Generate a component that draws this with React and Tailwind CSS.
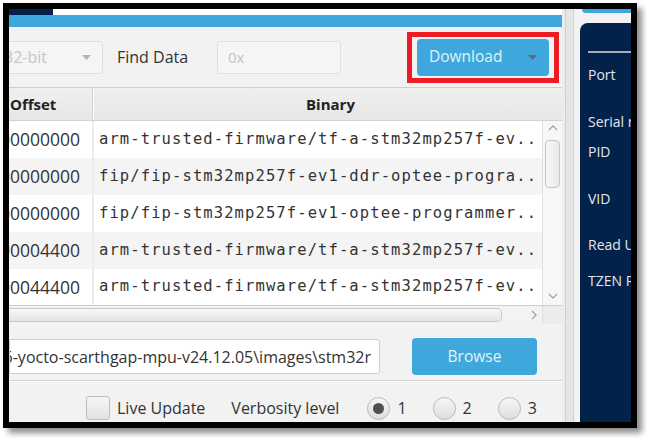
import React from "react";

const rows = [
  ["0x00000000", "arm-trusted-firmware/tf-a-stm32mp257f-ev.."],
  ["0x00000000", "fip/fip-stm32mp257f-ev1-ddr-optee-progra.."],
  ["0x00000000", "fip/fip-stm32mp257f-ev1-optee-programmer.."],
  ["0x00004400", "arm-trusted-firmware/tf-a-stm32mp257f-ev.."],
  ["0x00044400", "arm-trusted-firmware/tf-a-stm32mp257f-ev.."],
];

function Chevron({ dir }) {
  const pts = {
    up: "1,6 5,2 9,6",
    down: "1,2 5,6 9,2",
    right: "2,1 6,5 2,9",
  }[dir];
  return (
    <svg width="10" height="10" viewBox="0 0 10 10">
      <polyline points={pts} fill="none" stroke="#a2a2a2" strokeWidth="1.3" />
    </svg>
  );
}

function Radio({ checked, label }) {
  return (
    <div className="flex items-center">
      <div className="w-[23px] h-[23px] rounded-full border border-[#b9b9b9] bg-gradient-to-b from-[#f6f6f6] to-[#dedede] flex items-center justify-center">
        {checked && <div className="w-[11px] h-[11px] rounded-full bg-[#505050]" />}
      </div>
      <span className="ml-[7px] text-[16px] text-[#333]">{label}</span>
    </div>
  );
}

export default function App() {
  const sans = { fontFamily: '"Open Sans", "DejaVu Sans", sans-serif' };
  return (
    <div className="w-[647px] h-[438px] bg-white overflow-hidden" style={sans}>
      <div className="relative ml-[3px] mt-[3px] w-[634px] h-[425px] border-[6px] border-black shadow-[5px_5px_6px_rgba(0,0,0,0.45)] flex bg-[#f2f2f2]">
        {/* Left panel */}
        <div className="w-[553px] h-full flex flex-col overflow-hidden">
          <div className="h-[6px] bg-white flex">
            <div className="w-[44px] bg-[#03224a]" />
          </div>
          <div className="h-[12px] bg-[#3ea8dc]" />
          {/* toolbar */}
          <div className="h-[60px] flex items-center">
            <div className="-ml-[16px] w-[110px] h-[33px] rounded-[4px] border border-[#dedede] bg-[#f5f5f5] flex items-center justify-between pl-[10px] pr-[11px]">
              <span className="text-[16px] text-[#c6c6c6]">32-bit</span>
              <svg width="9" height="5" viewBox="0 0 9 5">
                <polygon points="0,0 9,0 4.5,5" fill="#b3b3b3" />
              </svg>
            </div>
            <div className="ml-[14px] w-[100px] text-[16px] text-[#333]">Find Data</div>
            <div className="w-[124px] h-[33px] rounded-[3px] border border-[#e0e0e0] bg-[#f5f5f5] flex items-center pl-[10px] text-[15px] text-[#c4c4c4]">
              0x
            </div>
            <div className="ml-[76px] w-[132px] h-[37px] rounded-[4px] bg-[#3ea8dc] flex items-center justify-between pl-[12px] pr-[12px]">
              <span className="text-[15.5px] text-[#e3f1f9]">Download</span>
              <svg width="9" height="5" viewBox="0 0 9 5">
                <polygon points="0,0 9,0 4.5,5" fill="#5e6970" />
              </svg>
            </div>
          </div>
          {/* table */}
          <div className="h-[237px] flex flex-col border-t border-[#cfcfcf]">
            <div className="h-[33px] flex bg-gradient-to-b from-[#f0f0f0] to-[#e6e6e6] border-b border-[#d2d2d2]">
              <div className="w-[83px] flex items-center pl-[1px] text-[15px] font-bold text-[#222]">Offset</div>
              <div className="w-[1px] bg-[#d4d4d4]" />
              <div className="w-[1px] bg-[#fafafa]" />
              <div className="flex-1 flex items-center pl-[212px] text-[15px] font-bold text-[#222]">Binary</div>
            </div>
            <div className="h-[184px] flex">
              <div className="w-[533px] flex flex-col">
                {rows.map((r, i) => (
                  <div
                    key={i}
                    className={`flex ${i === 4 ? "h-[36px]" : "h-[37px]"} ${i % 2 === 1 ? "bg-[#f4f4f4]" : "bg-white"}`}
                  >
                    <div className="w-[83px] flex items-center justify-end pr-[12px] overflow-hidden whitespace-nowrap text-[17.5px] text-[#333]">
                      {r[0]}
                    </div>
                    <div className="w-[2px] bg-[#ececec]" />
                    <div
                      className="flex-1 flex items-center pl-[5px] overflow-hidden whitespace-nowrap text-[15.5px] tracking-[1.1px] text-[#333]"
                      style={{ fontFamily: '"DejaVu Sans Mono", monospace' }}
                    >
                      {r[1]}
                    </div>
                  </div>
                ))}
              </div>
              <div className="w-[20px] bg-[#f7f7f7] border-l border-[#e2e2e2] flex flex-col items-center">
                <div className="mt-[3px]"><Chevron dir="up" /></div>
                <div className="mt-[6px] w-[15px] h-[48px] rounded-[4px] border border-[#c6c6c6] bg-gradient-to-r from-[#f8f8f8] to-[#e8e8e8]" />
                <div className="mt-auto mb-[3px]"><Chevron dir="down" /></div>
              </div>
            </div>
            <div className="h-[19px] flex border-t border-[#cdcdcd] bg-[#f3f3f3]">
              <div className="w-[533px] flex items-center">
                <div className="w-[493px] h-[14px] rounded-r-[5px] border border-l-0 border-[#c6c6c6] bg-gradient-to-b from-[#f8f8f8] to-[#e4e4e4]" />
                <div className="ml-[28px]"><Chevron dir="right" /></div>
              </div>
              <div className="w-[20px] bg-[#ececec] border-l border-[#e0e0e0]" />
            </div>
          </div>
          {/* path row */}
          <div className="mt-[14px] h-[37px] flex items-center">
            <div className="w-[371px] h-[35px] bg-white border border-[#d0d0d0] rounded-r-[3px] flex items-center justify-end pr-[8px] overflow-hidden whitespace-nowrap text-[16px] text-[#333]">
              en.flasher-stm32mp2-openstlinux-6.6-yocto-scarthgap-mpu-v24.12.05\images\stm32r
            </div>
            <div className="ml-[32px] w-[125px] h-[37px] rounded-[4px] bg-[#3ea8dc] flex items-center justify-center text-[15.5px] text-[#e3f1f9]">
              Browse
            </div>
          </div>
          <div className="mt-[5px] h-[1px] bg-[#d2d2d2]" />
          <div className="h-[1px] bg-[#fafafa]" />
          {/* bottom row */}
          <div className="flex items-center pt-[14px]">
            <div className="ml-[77px] w-[24px] h-[24px] rounded-[3px] border border-[#bcbcbc] bg-gradient-to-b from-[#f6f6f6] to-[#e2e2e2]" />
            <span className="ml-[7px] text-[16px] text-[#333]">Live Update</span>
            <span className="ml-[26px] text-[16px] text-[#333]">Verbosity level</span>
            <div className="ml-[28px]"><Radio checked label="1" /></div>
            <div className="ml-[26px]"><Radio label="2" /></div>
            <div className="ml-[26px]"><Radio label="3" /></div>
          </div>
        </div>
        {/* separator */}
        <div className="w-[18px] h-full flex">
          <div className="w-[3px] bg-[#ececec]" />
          <div className="w-[1px] bg-[#cfcfcf]" />
          <div className="w-[7px] bg-[#e5e5e5]" />
          <div className="w-[1px] bg-[#d2d2d2]" />
          <div className="w-[6px] bg-[#f2f2f2]" />
        </div>
        {/* right panel */}
        <div className="w-[51px] h-full flex flex-col overflow-hidden">
          <div className="h-[4px] ml-[2px] bg-[#3ea8dc] rounded-bl-[5px]" />
          <div className="h-[10px]" />
          <div className="flex-1 bg-[#03224a] rounded-tl-[8px] flex flex-col pl-[8px] text-[14px] leading-[20px] text-[#e4e6ea] whitespace-nowrap">
            <div className="mt-[28px] h-[2px] bg-[#a8aeb8]" />
            <div className="mt-[12px]">Port</div>
            <div className="mt-[27px]">Serial number</div>
            <div className="mt-[10px]">PID</div>
            <div className="mt-[27px]">VID</div>
            <div className="mt-[26px]">Read Unprotect</div>
            <div className="mt-[16px]">TZEN Regression</div>
          </div>
        </div>
        {/* red annotation */}
        <div className="absolute left-[398px] top-[23px] w-[152px] h-[51px] border-[5px] border-[#ed1c24]" />
      </div>
    </div>
  );
}
